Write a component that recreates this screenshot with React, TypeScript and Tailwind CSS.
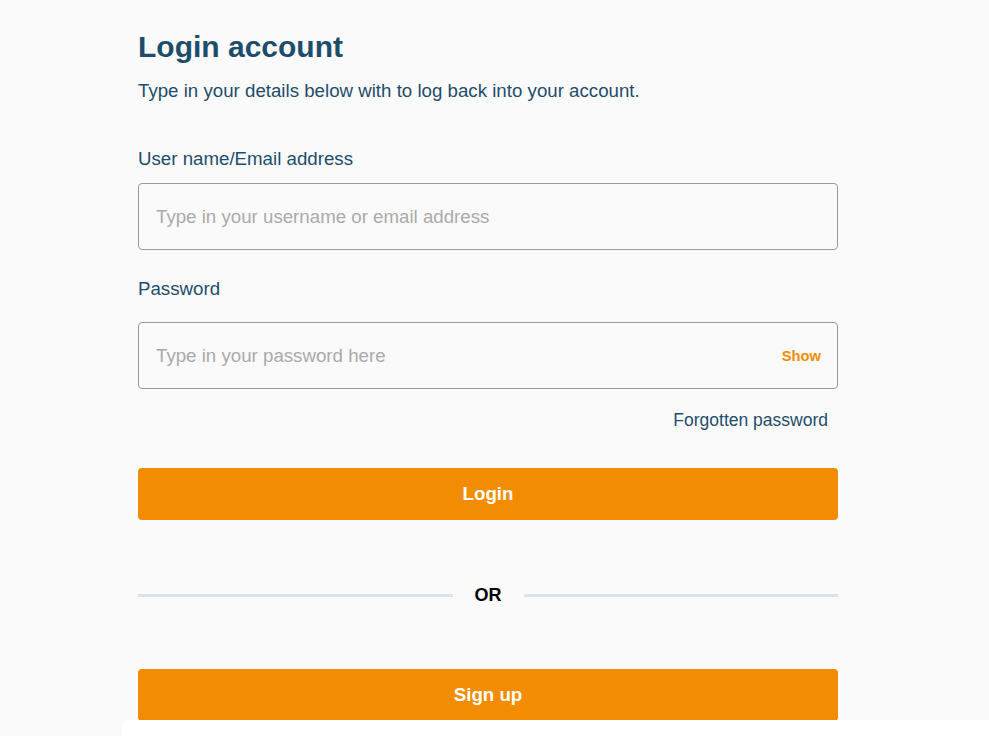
import { useState } from "react";

const LoginAccount = () => {
  const [showPassword, setShowPassword] = useState(false);

  return (
    <div className="relative min-h-[736px] bg-[#fafafa] font-['Liberation_Sans',Arial,sans-serif] text-[#1e4d6b] overflow-hidden">
      <div className="w-[700px] ml-[138px] pt-[28px]">
        <h1 className="text-[30px] font-bold leading-[38px]">Login account</h1>
        <p className="mt-[13px] text-[18.7px] leading-[24px]">
          Type in your details below with to log back into your account.
        </p>

        <label className="block mt-[44px] text-[18.7px] leading-[24px]">User name/Email address</label>
        <div className="mt-[12px] h-[67px] rounded-[4px] border border-[#9a9a9a] flex items-center px-[17px] pt-[2px]">
          <input
            className="w-full bg-transparent outline-none text-[18.7px] placeholder:text-[#aaaaaa]"
            placeholder="Type in your username or email address"
          />
        </div>

        <label className="block mt-[27px] text-[18.7px] leading-[24px]">Password</label>
        <div className="mt-[21px] h-[67px] rounded-[4px] border border-[#9a9a9a] flex items-center pl-[17px] pr-[16px] pt-[2px]">
          <input
            type={showPassword ? "text" : "password"}
            className="flex-1 bg-transparent outline-none text-[18.7px] placeholder:text-[#aaaaaa]"
            placeholder="Type in your password here"
          />
          <button
            className="text-[14.7px] font-bold text-[#f28c03]"
            onClick={() => setShowPassword(!showPassword)}
          >
            Show
          </button>
        </div>

        <div className="flex justify-end pr-[10px] mt-[19px]">
          <a className="text-[17.5px] leading-[24px] cursor-pointer">Forgotten password</a>
        </div>

        <button className="mt-[36px] w-full h-[52px] rounded-[4px] bg-[#f28c03] text-white text-[18.7px] font-bold">
          Login
        </button>

        <div className="mt-[63px] flex items-center gap-[22px]">
          <div className="flex-1 h-[3px] bg-[#dde3ea]" />
          <span className="text-[18px] font-bold text-black leading-[24px]">OR</span>
          <div className="flex-1 h-[3px] bg-[#dde3ea]" />
        </div>

        <button className="mt-[62px] w-full h-[52px] rounded-[4px] bg-[#f28c03] text-white text-[18.7px] font-bold">
          Sign up
        </button>
      </div>

      {/* panel sliding up from the bottom */}
      <div className="absolute left-[122px] right-0 top-[720px] h-[40px] bg-white rounded-tl-[8px]" />
    </div>
  );
};

export default LoginAccount;
